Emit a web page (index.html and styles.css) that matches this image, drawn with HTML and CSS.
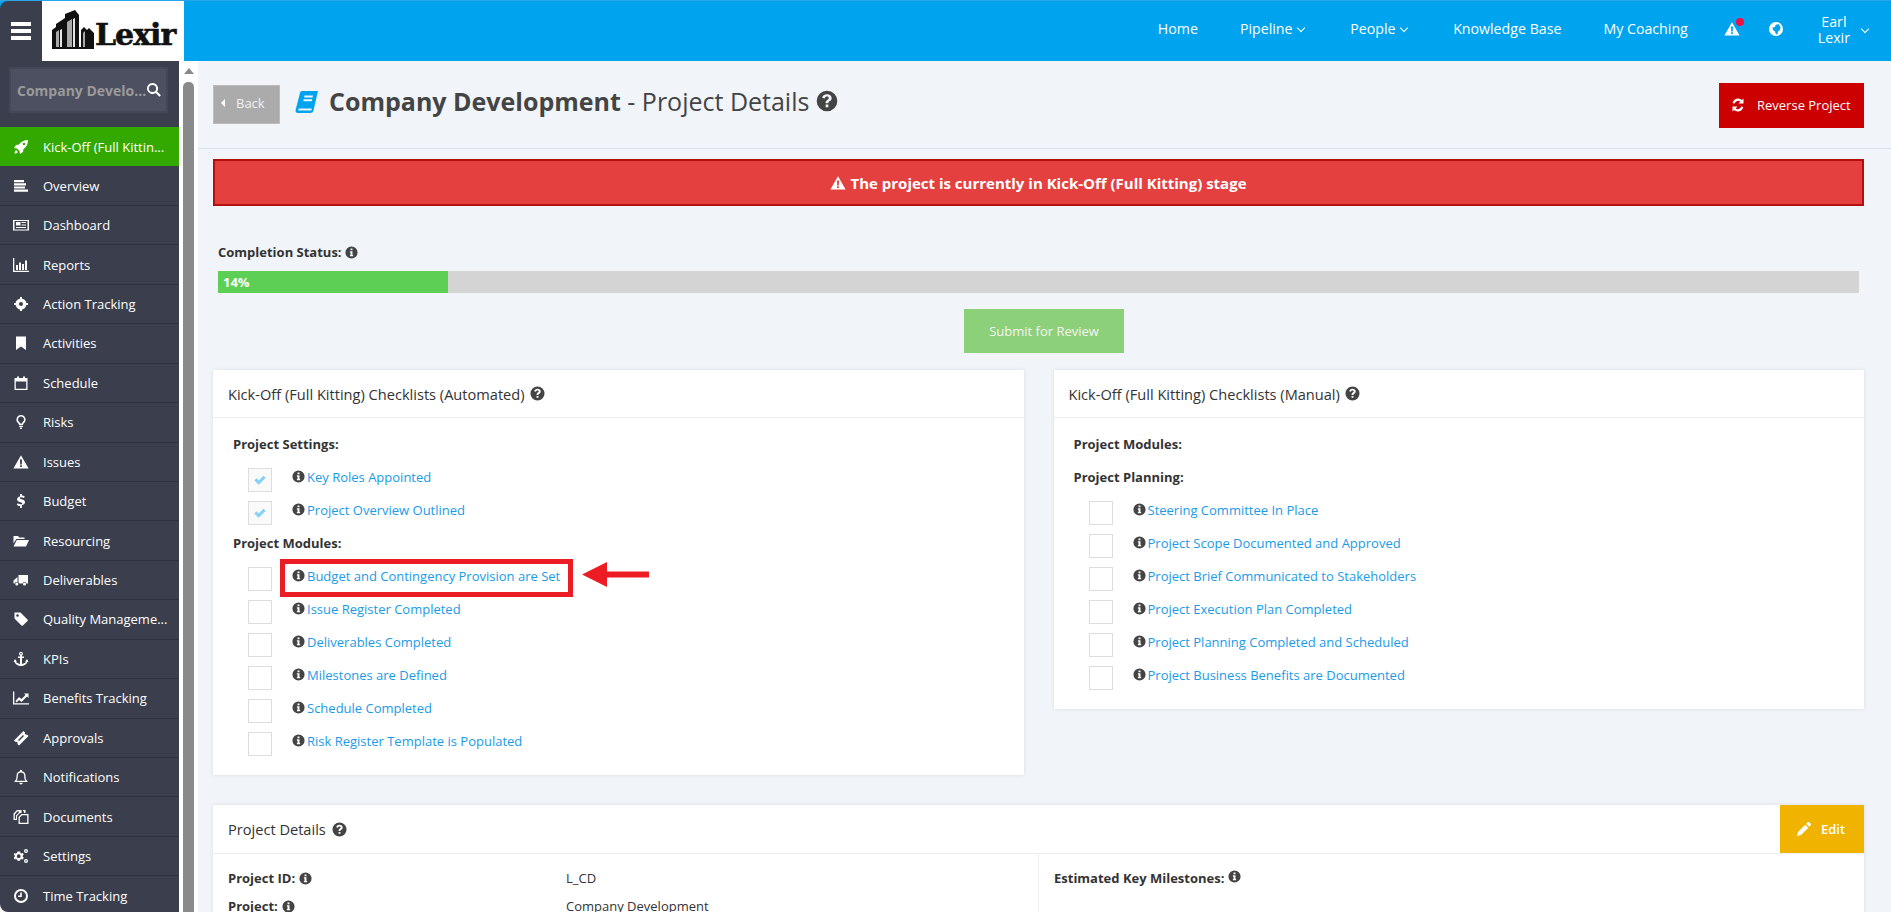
FILE: index.html
```html
<!doctype html>
<html>
  <head>
    <meta charset="utf-8">
    <title>Company Development - Project Details</title>
    <link rel="stylesheet" href="styles.css">
  </head>
  <body>
    <svg class="defs" aria-hidden="true">
      <symbol id="i-info" viewBox="0 0 16 16"><path fill-rule="evenodd" d="M8 .5a7.500 7.500 0 1 0 0 15A7.500 7.500 0 0 0 8 .5z M6.800 3h2.400v2.200H6.800z M6 6.400h3.200V11H10v1.600H6V11h.8V8H6z"/></symbol>
      <symbol id="i-help" viewBox="0 0 16 16"><path fill-rule="evenodd" d="M8 .5a7.500 7.500 0 1 0 0 15A7.500 7.500 0 0 0 8 .5z M8 3c-2 0-3.200 1-3.500 2.600l1.900.5C6.600 5.200 7.100 4.800 8 4.800c.8 0 1.300.4 1.300 1 0 .5-.3.8-1 1.200-.9.6-1.300 1.200-1.300 2.200v.4h2v-.3c0-.5.2-.7.9-1.100 1-.6 1.500-1.300 1.500-2.400C11.300 4.100 10 3 8 3z M7 10.600h2v2H7z"/></symbol>
      <symbol id="i-warn" viewBox="0 0 16 16"><path fill-rule="evenodd" d="M8 1.200 15.600 14.600H.4z M7 5.600h2l-.2 5H7.200z M7.100 11.300h1.800v1.800H7.100z"/></symbol>
      <symbol id="i-rocket" viewBox="0 0 16 16"><path fill-rule="evenodd" d="M15 1c-4 0-7 1.500-9 4.500L3 6 1 9l3 .5L6.500 12l.5 3 3-2 .5-3C13.500 8 15 5 15 1z M11 3.800a1.200 1.200 0 1 0 0 2.400 1.200 1.200 0 0 0 0-2.400z"/><path d="M3 11c-1 1-1.500 2.500-1.500 3.500 1 0 2.500-.5 3.500-1.500z"/></symbol>
      <symbol id="i-list" viewBox="0 0 16 16"><path d="M1 2h10v2.200H1z M1 5.200h12v2.200H1z M1 8.400h11v2.200H1z M1 11.600h14v2.200H1z"/></symbol>
      <symbol id="i-news" viewBox="0 0 16 16"><path fill-rule="evenodd" d="M0 3h16v10.500H0z M1.500 4v8.500h13V4z"/><path d="M3 5h4.500v3.500H3z M8.500 5H13v1H8.500z M8.500 7.500H13v1H8.500z M3 10h10v1H3z"/></symbol>
      <symbol id="i-bars" viewBox="0 0 16 16"><path d="M0 1h1.300v12.700H16V15H0z M3 8h2v5H3z M6 5.500h2V13H6z M9 7h2v6H9z M12 3.500h2V13h-2z"/></symbol>
      <symbol id="i-target" viewBox="0 0 16 16"><path fill-rule="evenodd" d="M8 2.500a5.500 5.500 0 1 0 0 11 5.500 5.500 0 0 0 0-11z M8 6a2 2 0 1 1 0 4 2 2 0 0 1 0-4z"/><path d="M7 1h2v3H7z M7 12h2v3H7z M1 7h3v2H1z M12 7h3v2h-3z"/></symbol>
      <symbol id="i-bookmark" viewBox="0 0 16 16"><path d="M3 1.500h10V15l-5-3.500L3 15z"/></symbol>
      <symbol id="i-calendar" viewBox="0 0 16 16"><path fill-rule="evenodd" d="M1.500 3H4V1.500h2V3h4V1.500h2V3h2.500v12h-13z M2.800 6.500v7.200h10.400V6.500z"/></symbol>
      <symbol id="i-bulb" viewBox="0 0 16 16"><path fill-rule="evenodd" d="M8 1a4.500 4.500 0 0 0-3 7.900c.6.600 1 1.300 1 2.100h4c0-.8.400-1.500 1-2.100A4.500 4.500 0 0 0 8 1z M8 2.500a3 3 0 0 1 2 5.300c-.5.500-1 1-1.200 1.700H7.200C7 8.800 6.500 8.300 6 7.800a3 3 0 0 1 2-5.300z"/><path d="M6.200 11.700h3.600v1.300H6.200z M7 13.500h2V15H7z"/></symbol>
      <symbol id="i-dollar" viewBox="0 0 16 16"><path d="M7.100 1h1.800v1.500c1.200.1 2.200.5 2.900 1l-.9 1.600c-.8-.5-1.700-.8-2.700-.8-.9 0-1.400.3-1.400.8 0 .6.700.8 1.900 1.100 1.800.5 3.300 1.100 3.300 3 0 1.500-1.100 2.500-3.100 2.800V15H7.100v-1.900c-1.300-.1-2.500-.6-3.300-1.300l1-1.600c.9.700 1.900 1.100 3 1.100 1 0 1.500-.3 1.500-.9 0-.6-.7-.8-2-1.200C5.500 8.700 4.100 8.100 4.100 6.200c0-1.400 1.100-2.500 3-2.800z"/></symbol>
      <symbol id="i-folder" viewBox="0 0 16 16"><path d="M.5 3h4.500l1.200 1.500h5.300v1.500H3.300L.5 10.500z M3.800 7H16l-3 6.500H.5z"/></symbol>
      <symbol id="i-truck" viewBox="0 0 16 16"><path d="M5.500 3H15v8.500h-1.600a2 2 0 0 0-3.800 0H6.400a2 2 0 0 0-.9-1z M4.500 5v5.300a2 2 0 0 0-2.900 1.200H.5V8.500z"/><circle cx="3.800" cy="12" r="1.500"/><circle cx="11.500" cy="12" r="1.500"/></symbol>
      <symbol id="i-tag" viewBox="0 0 16 16"><path fill-rule="evenodd" d="M1.500 1.500h6l7 7a1 1 0 0 1 0 1.400l-4.600 4.600a1 1 0 0 1-1.400 0l-7-7z M4.500 3.200a1.300 1.300 0 1 0 0 2.600 1.300 1.300 0 0 0 0-2.600z"/></symbol>
      <symbol id="i-anchor" viewBox="0 0 16 16"><path fill-rule="evenodd" d="M8 .8a2 2 0 0 0-1 3.700V5.500H5V7h2v6c-2-.2-3.600-1.100-4-2.400l1 .1L2 8 .5 11l1 .1C2.200 13.500 4.800 15 8 15s5.800-1.500 6.500-3.900l1-.1L14 8l-2 2.700 1-.1c-.4 1.300-2 2.200-4 2.400V7h2V5.500H9v-1A2 2 0 0 0 8 .8z M8 2a.8.8 0 1 1 0 1.600A.8.8 0 0 1 8 2z"/></symbol>
      <symbol id="i-chart" viewBox="0 0 16 16"><path d="M0 1.500h1.300v11.700H16v1.300H0z"/><path d="M2.500 11l3.500-4 2.500 2L12.500 5l-1.500-1.500H15.500V8L14 6.500 8.500 12 6 10l-2.500 2.500z"/></symbol>
      <symbol id="i-ticket" viewBox="0 0 16 16"><path fill-rule="evenodd" d="M10.500 1l1.500 1.500a1.500 1.500 0 0 0 2 2L15.500 6 6 15.500 4.500 14a1.500 1.500 0 0 0-2-2L1 10.500z M10 5 5 10l1 1 5-5z"/></symbol>
      <symbol id="i-bell" viewBox="0 0 16 16"><path fill-rule="evenodd" d="M8 .8a1.100 1.100 0 0 0-1 1.500C4.800 2.800 3.500 4.500 3.500 7c0 3-1 4.300-2 5.200v.8h13v-.8c-1-.9-2-2.200-2-5.200 0-2.500-1.300-4.200-3.500-4.700A1.100 1.100 0 0 0 8 .8z M8 3.500c2.200 0 3.200 1.500 3.200 3.500 0 2.500.6 3.900 1.300 4.800h-9c.7-.9 1.300-2.300 1.300-4.800 0-2 1-3.500 3.200-3.500z"/><path d="M6.300 13.700h3.400a1.700 1.700 0 0 1-3.400 0z"/></symbol>
      <symbol id="i-files" viewBox="0 0 16 16"><path fill-rule="evenodd" d="M4 1h4.500v3H7L4 7v4H.5V4.500z M1.800 5.500V9.800H3V6.500L5.800 3.800V2.300H4.500z"/><path fill-rule="evenodd" d="M10 1h2.500v3H11V2.300h-1z"/><path fill-rule="evenodd" d="M8.500 5H15.500v10H5.500V8z M9 6.300 6.800 8.500v5.200h7.400V6.300z"/></symbol>
      <symbol id="i-cogs" viewBox="0 0 16 16"><path fill-rule="evenodd" d="M4.500 3.500h2.500l.4 1.300 1.200.6 1.200-.5 1 1.700-1 .9v1.300l1 .9-1 1.700-1.200-.5-1.200.6-.4 1.300H4.500l-.4-1.300-1.200-.6-1.200.5-1-1.700 1-.9V7.500l-1-.9 1-1.700 1.200.5 1.200-.6z M5.700 6.300a1.900 1.900 0 1 0 0 3.800 1.900 1.900 0 0 0 0-3.800z"/><path fill-rule="evenodd" d="M13 1a2 2 0 1 0 0 4 2 2 0 0 0 0-4z M13 2.300a.7.700 0 1 1 0 1.400.7.700 0 0 1 0-1.400z"/><path fill-rule="evenodd" d="M13 11a2 2 0 1 0 0 4 2 2 0 0 0 0-4z M13 12.300a.7.700 0 1 1 0 1.400.7.700 0 0 1 0-1.400z"/></symbol>
      <symbol id="i-clock" viewBox="0 0 16 16"><path fill-rule="evenodd" d="M8 1a7 7 0 1 0 0 14A7 7 0 0 0 8 1z M8 3a5 5 0 1 1 0 10A5 5 0 0 1 8 3z"/><path d="M7.200 4.500h1.600V9H5V7.500h2.200z"/></symbol>
      <symbol id="i-search" viewBox="0 0 16 16"><path fill-rule="evenodd" d="M6.500 1a5.500 5.500 0 1 0 3.200 10l3.700 3.800 1.500-1.500-3.800-3.700A5.500 5.500 0 0 0 6.500 1z M6.500 2.900a3.600 3.600 0 1 1 0 7.200 3.600 3.600 0 0 1 0-7.200z"/></symbol>
      <symbol id="i-globe" viewBox="0 0 16 16"><path fill-rule="evenodd" d="M8 1a7 7 0 1 0 0 14A7 7 0 0 0 8 1z M10.500 3l2 3-.5 3-2 1.500-.5 2.500-1.500.5-1-3L5 9 4.500 6.500 7 6l.5-2z"/></symbol>
      <symbol id="i-sync" viewBox="0 0 16 16"><path d="M13.500 1.500v5h-5l1.900-1.900A3.600 3.600 0 0 0 4.700 6.400L2.600 5.900A5.800 5.800 0 0 1 12 3z M2.500 14.500v-5h5l-1.900 1.900a3.600 3.600 0 0 0 5.700-1.800l2.100.5A5.800 5.800 0 0 1 4 13z"/></symbol>
      <symbol id="i-book" viewBox="0 0 24 24"><path fill-rule="evenodd" d="M7 1h16l-.5 2-4 17.500c-.3 1.600-1.400 2.500-3 2.500H3c-1.800 0-2.700-1.300-2.400-3L5 3c.2-1.200 1-2 2-2z M9.500 5.500 9.100 7.500h8.500l.4-2z M8.700 9.200l-.4 2h8.500l.4-2z M4.500 18.500c-.6 0-1.100.5-1.200 1-.1.600.3 1 .9 1h11.500c.4 0 .7-.2.800-.6l.3-1.400z"/></symbol>
      <symbol id="i-pencil" viewBox="0 0 16 16"><path d="M11.500 1.500a1.500 1.500 0 0 1 2.100 0l.9.900a1.500 1.500 0 0 1 0 2.100l-1.300 1.300-3-3z M9.300 3.700l3 3-7.300 7.300-4 1 1-4z"/></symbol>
    </svg>

    <div class="app">
      <header class="topbar">
        <button class="burger" type="button" aria-label="Menu"><span></span><span></span><span></span></button>
        <a class="logo" href="#">
          <svg class="logo-mark" viewBox="0 0 42 40" aria-hidden="true">
            <path fill="#111" d="M0 39V20l4-3v-3l9-6V4l10-4 4 5v32h2V20l3-3 3 3 2-2 5 5v16z"/>
            <path fill="#aaa" d="M4 37V22l3-2v17z M15 37V12l5-3v28z M31 37V23l2-2v16z"/>
            <path fill="#e5e5e5" d="M8 37V20l2-1v18z M21 37V9l2-1v29z"/>
          </svg>
          <span class="logo-text">Lexir</span>
        </a>
        <nav class="topnav">
          <a href="#">Home</a>
          <a href="#">Pipeline <i class="chev"></i></a>
          <a href="#">People <i class="chev"></i></a>
          <a href="#">Knowledge Base</a>
          <a href="#">My Coaching</a>
          <a class="nav-icon nav-alert" href="#" aria-label="Alerts"><svg class="ic"><use href="#i-warn"/></svg><b class="dot"></b></a>
          <a class="nav-icon" href="#" aria-label="Language"><svg class="ic"><use href="#i-globe"/></svg></a>
          <a class="nav-user" href="#"><span>Earl<br>Lexir</span><i class="chev"></i></a>
        </nav>
      </header>

      <div class="layout">
        <aside class="sidebar">
          <div class="side-search">
            <div class="search-box">
              <span class="search-text">Company Develo...</span>
              <svg class="ic search-ic"><use href="#i-search"/></svg>
            </div>
          </div>
          <ul class="side-menu">
            <li class="active"><svg class="ic"><use href="#i-rocket"/></svg><span>Kick-Off (Full Kittin...</span></li>
            <li><svg class="ic"><use href="#i-list"/></svg><span>Overview</span></li>
            <li><svg class="ic"><use href="#i-news"/></svg><span>Dashboard</span></li>
            <li><svg class="ic"><use href="#i-bars"/></svg><span>Reports</span></li>
            <li><svg class="ic"><use href="#i-target"/></svg><span>Action Tracking</span></li>
            <li><svg class="ic"><use href="#i-bookmark"/></svg><span>Activities</span></li>
            <li><svg class="ic"><use href="#i-calendar"/></svg><span>Schedule</span></li>
            <li><svg class="ic"><use href="#i-bulb"/></svg><span>Risks</span></li>
            <li><svg class="ic"><use href="#i-warn"/></svg><span>Issues</span></li>
            <li><svg class="ic"><use href="#i-dollar"/></svg><span>Budget</span></li>
            <li><svg class="ic"><use href="#i-folder"/></svg><span>Resourcing</span></li>
            <li><svg class="ic"><use href="#i-truck"/></svg><span>Deliverables</span></li>
            <li><svg class="ic"><use href="#i-tag"/></svg><span>Quality Manageme...</span></li>
            <li><svg class="ic"><use href="#i-anchor"/></svg><span>KPIs</span></li>
            <li><svg class="ic"><use href="#i-chart"/></svg><span>Benefits Tracking</span></li>
            <li><svg class="ic"><use href="#i-ticket"/></svg><span>Approvals</span></li>
            <li><svg class="ic"><use href="#i-bell"/></svg><span>Notifications</span></li>
            <li><svg class="ic"><use href="#i-files"/></svg><span>Documents</span></li>
            <li><svg class="ic"><use href="#i-cogs"/></svg><span>Settings</span></li>
            <li><svg class="ic"><use href="#i-clock"/></svg><span>Time Tracking</span></li>
          </ul>
        </aside>

        <div class="scrollbar"><i class="scroll-up"></i><i class="scroll-thumb"></i></div>

        <main class="main">
          <div class="page-head">
            <a class="btn-back" href="#"><i class="tri-left"></i>Back</a>
            <svg class="book"><use href="#i-book"/></svg>
            <h1><strong>Company Development</strong> - Project Details</h1>
            <svg class="ic head-help"><use href="#i-help"/></svg>
            <a class="btn-reverse" href="#"><svg class="ic"><use href="#i-sync"/></svg>Reverse Project</a>
          </div>

          <div class="alert"><svg class="ic"><use href="#i-warn"/></svg> The project is currently in Kick-Off (Full Kitting) stage</div>

          <div class="status">
            <div class="status-label">Completion Status: <svg class="ic info"><use href="#i-info"/></svg></div>
            <div class="progress"><div class="progress-bar" style="width: 14%">14%</div></div>
          </div>

          <div class="submit-row"><a class="btn-submit" href="#">Submit for Review</a></div>

          <div class="cards">
            <section class="card">
              <h2 class="card-head">Kick-Off (Full Kitting) Checklists (Automated) <svg class="ic help"><use href="#i-help"/></svg></h2>
              <div class="card-body">
                <h3>Project Settings:</h3>
                <ul class="checks">
                  <li><i class="box checked"><svg viewBox="0 0 16 16"><path d="M1.500 8.500 4 6 6.500 8.500 12 3l2.500 2.500-8 8z"/></svg></i><svg class="ic info"><use href="#i-info"/></svg><a href="#">Key Roles Appointed</a></li>
                  <li><i class="box checked"><svg viewBox="0 0 16 16"><path d="M1.500 8.500 4 6 6.500 8.500 12 3l2.500 2.500-8 8z"/></svg></i><svg class="ic info"><use href="#i-info"/></svg><a href="#">Project Overview Outlined</a></li>
                </ul>
                <h3>Project Modules:</h3>
                <ul class="checks">
                  <li class="marked"><i class="box"></i><svg class="ic info"><use href="#i-info"/></svg><a href="#">Budget and Contingency Provision are Set</a>
                    <span class="highlight"></span>
                    <svg class="callout" viewBox="0 0 67 25" aria-hidden="true"><path d="M0 12.500 25 0v9.500h42v6H25V25z"/></svg>
                  </li>
                  <li><i class="box"></i><svg class="ic info"><use href="#i-info"/></svg><a href="#">Issue Register Completed</a></li>
                  <li><i class="box"></i><svg class="ic info"><use href="#i-info"/></svg><a href="#">Deliverables Completed</a></li>
                  <li><i class="box"></i><svg class="ic info"><use href="#i-info"/></svg><a href="#">Milestones are Defined</a></li>
                  <li><i class="box"></i><svg class="ic info"><use href="#i-info"/></svg><a href="#">Schedule Completed</a></li>
                  <li><i class="box"></i><svg class="ic info"><use href="#i-info"/></svg><a href="#">Risk Register Template is Populated</a></li>
                </ul>
              </div>
            </section>

            <section class="card">
              <h2 class="card-head">Kick-Off (Full Kitting) Checklists (Manual) <svg class="ic help"><use href="#i-help"/></svg></h2>
              <div class="card-body">
                <h3>Project Modules:</h3>
                <h3>Project Planning:</h3>
                <ul class="checks">
                  <li><i class="box"></i><svg class="ic info"><use href="#i-info"/></svg><a href="#">Steering Committee In Place</a></li>
                  <li><i class="box"></i><svg class="ic info"><use href="#i-info"/></svg><a href="#">Project Scope Documented and Approved</a></li>
                  <li><i class="box"></i><svg class="ic info"><use href="#i-info"/></svg><a href="#">Project Brief Communicated to Stakeholders</a></li>
                  <li><i class="box"></i><svg class="ic info"><use href="#i-info"/></svg><a href="#">Project Execution Plan Completed</a></li>
                  <li><i class="box"></i><svg class="ic info"><use href="#i-info"/></svg><a href="#">Project Planning Completed and Scheduled</a></li>
                  <li><i class="box"></i><svg class="ic info"><use href="#i-info"/></svg><a href="#">Project Business Benefits are Documented</a></li>
                </ul>
              </div>
            </section>
          </div>

          <section class="card details">
            <div class="details-head">
              <h2>Project Details <svg class="ic help"><use href="#i-help"/></svg></h2>
              <a class="btn-edit" href="#"><svg class="ic"><use href="#i-pencil"/></svg>Edit</a>
            </div>
            <div class="details-body">
              <dl class="facts">
                <dt>Project ID: <svg class="ic info"><use href="#i-info"/></svg></dt><dd>L_CD</dd>
                <dt>Project: <svg class="ic info"><use href="#i-info"/></svg></dt><dd>Company Development</dd>
              </dl>
              <div class="milestones"><b>Estimated Key Milestones: <svg class="ic info"><use href="#i-info"/></svg></b></div>
            </div>
          </section>
        </main>
      </div>
    </div>
  </body>
</html>
```

FILE: styles.css
```css
html {
  box-sizing: border-box;
}

*, *:before, *:after {
  box-sizing: inherit;
}

body {
  background: #fff;
  color: #333;
  font-family: "Open Sans", sans-serif;
  font-size: 13px;
  height: 912px;
  margin: 0;
  overflow: hidden;
}

a {
  color: inherit;
  text-decoration: none;
}

ul {
  list-style: none;
  margin: 0;
  padding: 0;
}

.defs {
  height: 0;
  position: absolute;
  width: 0;
}

.ic {
  fill: currentColor;
  flex: none;
  height: 16px;
  width: 16px;
}

.app {
  display: flex;
  flex-direction: column;
  height: 912px;
  overflow: hidden;
}

/* top bar */

.topbar {
  background: #00a3ee;
  border-top: 1px solid #2aa6e8;
  display: flex;
  flex: none;
  height: 61px;
}

.burger {
  background: #3a3e4d;
  border: 0;
  border-top-left-radius: 8px;
  display: flex;
  flex-direction: column;
  gap: 3px;
  height: 60px;
  justify-content: center;
  padding: 0 11px;
  width: 42px;
}

.burger span {
  background: #fff;
  display: block;
  height: 4px;
  width: 20px;
}

.logo {
  align-items: flex-end;
  background: #fff;
  display: flex;
  gap: 1px;
  padding: 0 0 11px 10px;
  width: 142px;
}

.logo-mark {
  height: 40px;
  width: 42px;
}

.logo-text {
  color: #111;
  font-family: "DejaVu Serif", serif;
  font-size: 30px;
  font-weight: 700;
  letter-spacing: -1px;
  line-height: 30px;
  -webkit-text-stroke: 0.6px #111;
}

.topnav {
  align-items: center;
  color: #fff;
  display: flex;
  flex: 1;
  font-size: 14.200px;
  justify-content: flex-end;
  padding: 0 23px 5px 0;
}

.topnav > a {
  margin-left: 42px;
}

.chev {
  border-bottom: 1px solid #fff;
  border-right: 1px solid #fff;
  display: inline-block;
  height: 6px;
  margin: 0 0 3px 2px;
  transform: rotate(45deg);
  width: 6px;
}

.topnav a > .chev:first-child,
.topnav a:nth-child(2) .chev,
.topnav a:nth-child(3) .chev {
  margin-right: 4px;
}

.topnav .nav-icon {
  display: flex;
  position: relative;
}

.topnav .nav-alert {
  margin-left: 36px;
}

.topnav .nav-alert + .nav-icon {
  margin-left: 28px;
}

.dot {
  background: #ee1144;
  border-radius: 50%;
  height: 8px;
  position: absolute;
  right: -4px;
  top: -3px;
  width: 8px;
}

.topnav .nav-user {
  align-items: center;
  display: flex;
  gap: 10px;
  line-height: 16px;
  margin: 3px 0 0 34px;
  text-align: center;
}

/* sidebar */

.layout {
  display: flex;
  flex: 1;
  min-height: 0;
}

.sidebar {
  background: #3a3e4d;
  border-bottom-left-radius: 8px;
  color: #fff;
  flex: none;
  overflow: hidden;
  width: 179px;
}

.side-search {
  height: 66px;
  padding: 6px 11px 0 9px;
}

.search-box {
  align-items: center;
  background: #4d5060;
  border: 2px solid #444757;
  display: flex;
  height: 46px;
  justify-content: space-between;
  padding: 0 10px 0 6px;
}

.search-text {
  color: #9a9a9a;
  font-size: 14px;
  font-weight: 700;
  white-space: nowrap;
}

.search-ic {
  color: #fff;
}

.side-menu li {
  align-items: center;
  border-bottom: 1px solid #2e313e;
  display: flex;
  gap: 14px;
  height: 39.450px;
  padding-left: 13px;
}

.side-menu li span {
  white-space: nowrap;
}

.side-menu .active {
  background: #33a900;
  border-bottom: 0;
}

.scrollbar {
  background: #fff;
  flex: none;
  padding: 0 4px;
  width: 19px;
}

.scroll-up {
  border-bottom: 6px solid #8a8a8a;
  border-left: 5px solid transparent;
  border-right: 5px solid transparent;
  display: block;
  height: 0;
  margin: 7px auto 8px;
  width: 0;
}

.scroll-thumb {
  background: #8a8a8a;
  border-radius: 5px 5px 0 0;
  display: block;
  height: 900px;
  width: 11px;
}

/* main column */

.main {
  background: #f1f4f8;
  flex: 1;
  min-width: 0;
  overflow: hidden;
  padding: 0 27px 0 15px;
}

.page-head {
  align-items: flex-start;
  border-bottom: 1px solid #d8e0e8;
  color: #444;
  display: flex;
  height: 88px;
  margin-left: -15px;
  margin-right: -27px;
  padding: 22px 27px 0 15px;
}

.btn-back {
  align-items: center;
  background: #ababab;
  border: 1px solid #bbb;
  color: #f1f1f1;
  display: flex;
  height: 39px;
  margin-top: 2px;
  padding: 0 0 4px 7px;
  width: 67px;
}

.tri-left {
  border-bottom: 4px solid transparent;
  border-right: 4px solid #fff;
  border-top: 4px solid transparent;
  margin-right: 11px;
}

.book {
  color: #00a3ee;
  fill: currentColor;
  height: 24px;
  margin: 7px 0 0 15px;
  width: 24px;
}

h1 {
  font-size: 25px;
  font-weight: 400;
  line-height: 36px;
  margin: 0 0 0 10px;
}

h1 strong {
  font-weight: 700;
}

.head-help {
  height: 22px;
  margin: 7px 0 0 7px;
  width: 22px;
}

.btn-reverse {
  align-items: center;
  background: #cc0000;
  color: #fff;
  display: flex;
  gap: 11px;
  height: 45px;
  margin-left: auto;
  padding: 0 0 1px 11px;
  width: 145px;
}

.alert {
  align-items: center;
  background: #e54040;
  border: 2px solid #b30f0f;
  color: #fff;
  display: flex;
  font-size: 15px;
  font-weight: 700;
  gap: 4px;
  height: 47px;
  justify-content: center;
  margin-top: 10px;
}

.status {
  padding: 37px 5px 0;
}

.status-label {
  align-items: center;
  display: flex;
  font-weight: 700;
  gap: 3px;
  height: 18px;
}

.info {
  color: #444;
  height: 13px;
  width: 13px;
}

.progress {
  background: #d4d4d4;
  height: 22px;
  margin-top: 10px;
}

.progress-bar {
  background: #5dcf54;
  color: #fff;
  font-weight: 700;
  height: 22px;
  line-height: 22px;
  padding-left: 5px;
}

.submit-row {
  display: flex;
  justify-content: center;
  margin-top: 16px;
  padding-left: 11px;
}

.btn-submit {
  background: #8dd07a;
  color: #f4f4f4;
  height: 44px;
  line-height: 44px;
  text-align: center;
  width: 160px;
}

.cards {
  align-items: flex-start;
  display: grid;
  gap: 30px;
  grid-template-columns: 1fr 1fr;
  margin-top: 17px;
}

.card {
  background: #fff;
  box-shadow: 0 0 4px rgba(0, 0, 0, 0.1);
}

.card-head {
  align-items: center;
  border-bottom: 1px solid #eceff2;
  color: #333;
  display: flex;
  font-size: 14.600px;
  font-weight: 400;
  gap: 5px;
  height: 48px;
  margin: 0;
  padding-left: 15px;
}

.help {
  color: #444;
  height: 15px;
  width: 15px;
}

.card-body {
  padding: 17px 20px 10px;
}

.card-body h3 {
  font-size: 13px;
  font-weight: 700;
  height: 18px;
  line-height: 18px;
  margin: 0 0 15px;
}

.checks li {
  align-items: flex-start;
  display: flex;
  height: 33px;
  padding-left: 15px;
  position: relative;
}

.checks a {
  color: #1a9be8;
  line-height: 18px;
  margin-left: 2px;
}

.checks .info {
  margin: 2px 0 0 20px;
}

.box {
  background: #fff;
  border: 1px solid #ddd;
  display: block;
  flex: none;
  height: 24px;
  width: 24px;
}

.box.checked {
  background: #fafafa;
  padding: 4px;
}

.box svg {
  display: block;
  fill: #84d0f7;
}

.highlight {
  border: 5px solid #ec1c24;
  height: 38px;
  left: 47px;
  position: absolute;
  top: -8px;
  width: 293px;
}

.callout {
  fill: #ec1c24;
  height: 25px;
  left: 349px;
  position: absolute;
  top: -5px;
  width: 67px;
}

/* project details */

.details {
  margin-top: 30px;
}

.details-head {
  align-items: flex-start;
  border-bottom: 1px solid #eceff2;
  display: flex;
  height: 49px;
  justify-content: space-between;
}

.details-head h2 {
  align-items: center;
  display: flex;
  font-size: 14.600px;
  font-weight: 400;
  gap: 6px;
  height: 48px;
  margin: 0;
  padding-left: 15px;
}

.btn-edit {
  align-items: center;
  background: #f0b400;
  color: #fff;
  display: flex;
  font-weight: 600;
  gap: 9px;
  height: 48px;
  padding-left: 16px;
  width: 84px;
}

.details-body {
  display: flex;
}

.facts {
  border-right: 1px solid #eceff2;
  display: grid;
  grid-template-columns: 338px 1fr;
  margin: 0;
  padding: 15px 15px 0;
  row-gap: 10px;
  width: 826px;
}

.facts dt {
  align-items: center;
  display: flex;
  font-weight: 700;
  gap: 4px;
  height: 18px;
}

.facts dd {
  line-height: 18px;
  margin: 0;
}

.milestones {
  padding: 15px 0 0 15px;
}
```
